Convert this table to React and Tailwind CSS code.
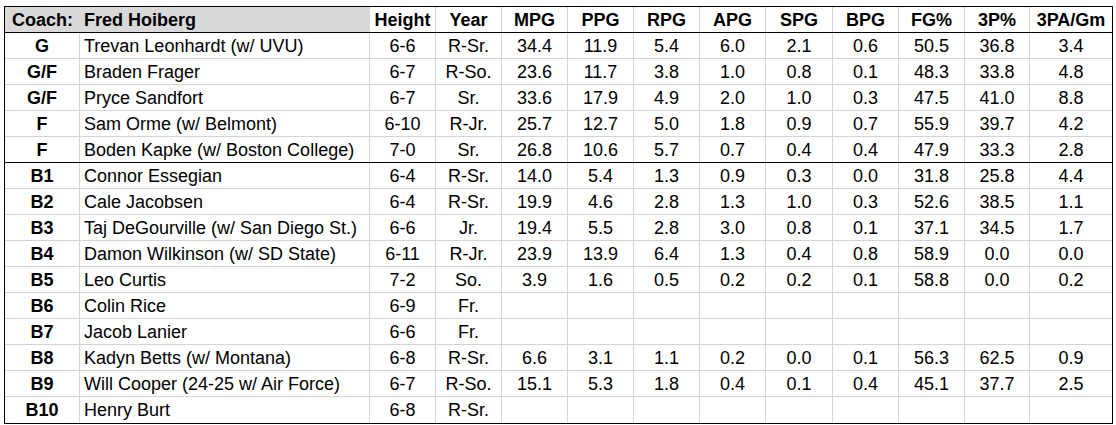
const cols = [
  "w-[75px]",
  "w-[290px]",
  "w-[66px]",
  "w-[66px]",
  "w-[66px]",
  "w-[66px]",
  "w-[66px]",
  "w-[66px]",
  "w-[67px]",
  "w-[66px]",
  "w-[66px]",
  "w-[65px]",
  "w-[82px]",
];

const heads = ["Height", "Year", "MPG", "PPG", "RPG", "APG", "SPG", "BPG", "FG%", "3P%", "3PA/Gm"];

const players = [
  ["G", "Trevan Leonhardt (w/ UVU)", "6-6", "R-Sr.", "34.4", "11.9", "5.4", "6.0", "2.1", "0.6", "50.5", "36.8", "3.4"],
  ["G/F", "Braden Frager", "6-7", "R-So.", "23.6", "11.7", "3.8", "1.0", "0.8", "0.1", "48.3", "33.8", "4.8"],
  ["G/F", "Pryce Sandfort", "6-7", "Sr.", "33.6", "17.9", "4.9", "2.0", "1.0", "0.3", "47.5", "41.0", "8.8"],
  ["F", "Sam Orme (w/ Belmont)", "6-10", "R-Jr.", "25.7", "12.7", "5.0", "1.8", "0.9", "0.7", "55.9", "39.7", "4.2"],
  ["F", "Boden Kapke (w/ Boston College)", "7-0", "Sr.", "26.8", "10.6", "5.7", "0.7", "0.4", "0.4", "47.9", "33.3", "2.8"],
  ["B1", "Connor Essegian", "6-4", "R-Sr.", "14.0", "5.4", "1.3", "0.9", "0.3", "0.0", "31.8", "25.8", "4.4"],
  ["B2", "Cale Jacobsen", "6-4", "R-Sr.", "19.9", "4.6", "2.8", "1.3", "1.0", "0.3", "52.6", "38.5", "1.1"],
  ["B3", "Taj DeGourville (w/ San Diego St.)", "6-6", "Jr.", "19.4", "5.5", "2.8", "3.0", "0.8", "0.1", "37.1", "34.5", "1.7"],
  ["B4", "Damon Wilkinson (w/ SD State)", "6-11", "R-Jr.", "23.9", "13.9", "6.4", "1.3", "0.4", "0.8", "58.9", "0.0", "0.0"],
  ["B5", "Leo Curtis", "7-2", "So.", "3.9", "1.6", "0.5", "0.2", "0.2", "0.1", "58.8", "0.0", "0.2"],
  ["B6", "Colin Rice", "6-9", "Fr.", "", "", "", "", "", "", "", "", ""],
  ["B7", "Jacob Lanier", "6-6", "Fr.", "", "", "", "", "", "", "", "", ""],
  ["B8", "Kadyn Betts (w/ Montana)", "6-8", "R-Sr.", "6.6", "3.1", "1.1", "0.2", "0.0", "0.1", "56.3", "62.5", "0.9"],
  ["B9", "Will Cooper (24-25 w/ Air Force)", "6-7", "R-So.", "15.1", "5.3", "1.8", "0.4", "0.1", "0.4", "45.1", "37.7", "2.5"],
  ["B10", "Henry Burt", "6-8", "R-Sr.", "", "", "", "", "", "", "", "", ""],
];

const Cell = ({ i, last, children, className = "" }) => (
  <div
    className={`${cols[i]} shrink-0 flex items-center ${
      i === 1 ? "justify-start pl-[4px]" : "justify-center"
    } ${last ? "" : "border-r border-[#d4d4d4]"} whitespace-nowrap overflow-hidden ${className}`}
  >
    {children}
  </div>
);

export default function App() {
  return (
    <div className="min-h-screen bg-white pt-[6px] pl-[4px] font-['Liberation_Sans',Arial,sans-serif] text-[18px] text-black leading-none">
      <div className="w-[1109px] border border-black">
        {/* header */}
        <div className="flex h-[26px] border-b border-black font-bold">
          <div className="w-[75px] shrink-0 flex items-center justify-center bg-[#d9d9d9]">Coach:</div>
          <div className="w-[290px] shrink-0 flex items-center pl-[4px] bg-[#d9d9d9]">Fred Hoiberg</div>
          {heads.map((h, k) => (
            <Cell key={h} i={k + 2} last={k === heads.length - 1}>
              {h}
            </Cell>
          ))}
        </div>

        {players.map((p, r) => (
          <div
            key={p[1]}
            className={`flex h-[26px] ${
              r === players.length - 1 ? "h-[25px]" : r === 4 ? "border-b border-black" : "border-b border-[#d4d4d4]"
            }`}
          >
            {p.map((v, i) => (
              <Cell key={i} i={i} last={i === p.length - 1} className={i === 0 ? "font-bold" : ""}>
                {v}
              </Cell>
            ))}
          </div>
        ))}
      </div>
    </div>
  );
}
